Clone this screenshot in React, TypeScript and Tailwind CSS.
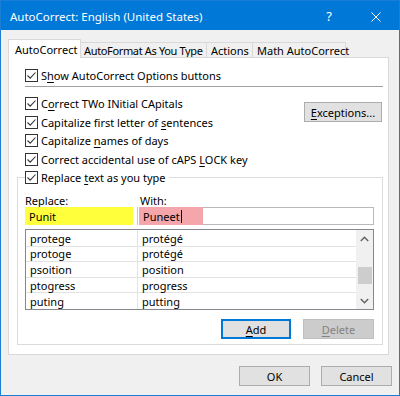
import React from "react";

function Check() {
  return (
    <span className="w-[13px] h-[13px] border border-[#333333] bg-white flex items-center justify-center shrink-0">
      <svg width="11" height="11" viewBox="0 0 11 11">
        <path d="M1.5 5.5 L4.2 8.2 L9.5 2.5" stroke="#333333" strokeWidth="1.1" fill="none" />
      </svg>
    </span>
  );
}

function U({ children }: { children: React.ReactNode }) {
  return <span className="underline underline-offset-[2px] decoration-[1px]">{children}</span>;
}

function Row({ h, children }: { h: string; children: React.ReactNode }) {
  return (
    <div className={`${h} flex items-center gap-[3px] pl-[8px]`}>
      <Check />
      <span className="whitespace-nowrap">{children}</span>
    </div>
  );
}

const rows: [string, string][] = [
  ["protege", "protégé"],
  ["protoge", "protégé"],
  ["psoition", "position"],
  ["ptogress", "progress"],
  ["puting", "putting"],
];

export default function App() {
  return (
    <div className="w-[400px] h-[396px] border border-[#1a7fd4] bg-[#f0f0f0] flex flex-col font-['Noto_Sans',sans-serif] text-[11px] text-black leading-none">
      {/* Title bar */}
      <div className="h-[29px] bg-[#0078d7] flex items-center text-white shrink-0">
        <span className="ml-[9px] text-[11.5px] mt-[2px]">AutoCorrect: English (United States)</span>
        <span className="ml-auto mr-[39px] text-[13px] mt-[2px]">?</span>
        <span className="mr-[18px] mt-[2px]">
          <svg width="10" height="10" viewBox="0 0 10 10">
            <path d="M0.5 0.5 L9.5 9.5 M9.5 0.5 L0.5 9.5" stroke="white" strokeWidth="1" />
          </svg>
        </span>
      </div>

      {/* Body */}
      <div className="flex flex-col pl-[7px]">
        {/* Tabs */}
        <div className="mt-[9px] flex items-end h-[18px] whitespace-nowrap">
          <div className="relative z-10 -mb-px h-[19px] w-[73px] bg-white border border-b-0 border-[#d9d9d9] flex items-center pl-[6px]">
            AutoCorrect
          </div>
          <div className="h-[15px] w-[126px] border border-b-0 border-l-0 border-[#d9d9d9] flex items-center pl-[3px] tracking-[-0.35px] overflow-hidden">
            AutoFormat As You Type
          </div>
          <div className="h-[15px] w-[46px] border border-b-0 border-l-0 border-[#d9d9d9] flex items-center pl-[4px]">
            Actions
          </div>
          <div className="h-[15px] w-[93px] border border-b-0 border-l-0 border-[#d9d9d9] flex items-center pl-[4px]">
            Math AutoCorrect
          </div>
        </div>

        {/* Panel */}
        <div className="w-[381px] h-[298px] bg-white border border-[#d9d9d9] pl-[8px] pr-[5px] flex flex-col">
          <div className="mt-[8px]">
            <Row h="h-[18px]">
              S<U>h</U>ow AutoCorrect Options buttons
            </Row>
          </div>
          <div className="mt-[2px] ml-[8px] h-px bg-[#a0a0a0]" />

          <div className="mt-[7px] flex">
            <div className="flex flex-col flex-1">
              <Row h="h-[19px]">
                C<U>o</U>rrect TWo INitial CApitals
              </Row>
              <Row h="h-[18px]">
                Capitalize first letter of <U>s</U>entences
              </Row>
              <Row h="h-[19px]">
                Capitalize <U>n</U>ames of days
              </Row>
              <Row h="h-[18px]">
                Correct accidental use of cAPS <U>L</U>OCK key
              </Row>
            </div>
            <div className="mr-px mt-[8px] w-[78px] h-[20px] bg-[#e1e1e1] border border-[#adadad] flex items-center justify-center">
              <span>
                <U>E</U>xceptions...
              </span>
            </div>
          </div>

          <fieldset className="border border-[#dcdcdc] pl-[7px] pr-[8px] pb-[5px] min-w-0">
            <legend className="h-[18px] pr-[3px] bg-white flex items-center gap-[3px]">
              <Check />
              <span className="whitespace-nowrap">
                Replace <U>t</U>ext as you type
              </span>
            </legend>
            <div className="mt-[7px] h-[14px] flex items-center">
              <span className="w-[115px]">
                <U>R</U>eplace:
              </span>
              <span>
                <U>W</U>ith:
              </span>
            </div>
            <div className="h-[18px] flex">
              <div className="w-[113px] h-full flex border-r border-[#c8c8c8]">
                <div className="w-[108px] h-full bg-[#ffff3c] flex items-center pl-[4px]">Punit</div>
              </div>
              <div className="relative ml-px flex-1 h-full border border-[#b9b9b9]">
                <div className="absolute -left-px -top-px -bottom-px w-[64px] bg-[#f4a6ab] flex items-center pl-[4px]">
                  Puneet
                  <span className="w-px h-[13px] bg-black ml-px" />
                </div>
              </div>
            </div>

            <div className="mt-[4px] h-[81px] border border-[#828790] flex">
              <div className="flex-1 flex flex-col pt-[1px]">
                {rows.map(([a, b], i) => (
                  <div
                    key={a}
                    className={`h-[16px] flex ${i < rows.length - 1 ? "border-b border-[#e3e3e3]" : ""}`}
                  >
                    <div className="w-[112px] h-full flex items-center pl-[4px] border-r border-[#e3e3e3]">{a}</div>
                    <div className="flex-1 h-full flex items-center pl-[4px]">{b}</div>
                  </div>
                ))}
              </div>
              <div className="w-[17px] h-full bg-[#f0f0f0] flex flex-col items-center">
                <div className="h-[17px] w-full flex items-center justify-center">
                  <svg width="9" height="6" viewBox="0 0 9 6">
                    <path d="M0.8 5 L4.5 1.2 L8.2 5" stroke="#606060" strokeWidth="1.4" fill="none" />
                  </svg>
                </div>
                <div className="mt-[20px] w-[14px] h-[17px] bg-[#cdcdcd]" />
                <div className="mt-auto h-[17px] w-full flex items-center justify-center">
                  <svg width="9" height="6" viewBox="0 0 9 6">
                    <path d="M0.8 1 L4.5 4.8 L8.2 1" stroke="#606060" strokeWidth="1.4" fill="none" />
                  </svg>
                </div>
              </div>
            </div>

            <div className="mt-[9px] flex justify-end gap-[12px]">
              <div className="w-[70px] h-[20px] bg-[#e1e1e1] border-2 border-[#0078d7] flex items-center justify-center">
                <U>A</U>dd
              </div>
              <div className="w-[71px] h-[20px] bg-[#cccccc] border border-[#bfbfbf] flex items-center justify-center text-[#838383]">
                <span>
                  <U>D</U>elete
                </span>
              </div>
            </div>
          </fieldset>
        </div>

        {/* Bottom buttons */}
        <div className="mt-[11px] mr-[7px] flex justify-end gap-[11px]">
          <div className="w-[71px] h-[20px] bg-[#e1e1e1] border border-[#adadad] flex items-center justify-center">OK</div>
          <div className="w-[71px] h-[20px] bg-[#e1e1e1] border border-[#adadad] flex items-center justify-center">Cancel</div>
        </div>
      </div>
    </div>
  );
}
